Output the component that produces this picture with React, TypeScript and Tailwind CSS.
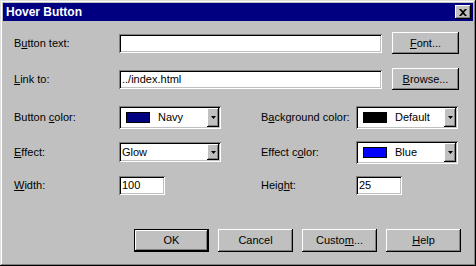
import React from "react";

const raised =
  "bg-[#c0c0c0] shadow-[inset_-1px_-1px_#000,inset_1px_1px_#fff,inset_-2px_-2px_#808080]";
const sunken =
  "bg-white shadow-[inset_1px_1px_#808080,inset_-1px_-1px_#fff,inset_2px_2px_#000,inset_-2px_-2px_#c0c0c0]";

function U({ children }: { children: React.ReactNode }) {
  return <span className="underline decoration-1 underline-offset-[1px]">{children}</span>;
}

function Label({ w, children }: { w: string; children: React.ReactNode }) {
  return <div className={`${w} shrink-0 text-[11px] text-black`}>{children}</div>;
}

function Input({ w, h = "h-[19px]", value }: { w: string; h?: string; value?: string }) {
  return (
    <div className={`${w} ${h} ${sunken} shrink-0 flex items-center pl-[3px] text-[11px] text-black`}>
      {value}
    </div>
  );
}

function Btn({ w, h, def, children }: { w: string; h: string; def?: boolean; children: React.ReactNode }) {
  if (def) {
    return (
      <div className={`${w} ${h} shrink-0 border border-black flex`}>
        <div className={`flex-1 ${raised} flex items-center justify-center text-[11px] text-black`}>
          {children}
        </div>
      </div>
    );
  }
  return (
    <div className={`${w} ${h} ${raised} shrink-0 flex items-center justify-center text-[11px] text-black`}>
      {children}
    </div>
  );
}

function Arrow() {
  return (
    <div className={`w-[12px] h-full ${raised} flex items-center justify-center`}>
      <svg width="5" height="3" viewBox="0 0 5 3">
        <path d="M0 0h5L2.5 3z" fill="#000" />
      </svg>
    </div>
  );
}

function ColorSelect({ w, h, color, label }: { w: string; h: string; color: string; label: string }) {
  return (
    <div className={`${w} ${h} ${sunken} shrink-0 flex p-[2px]`}>
      <div className="flex-1 flex items-center pl-[5px]">
        <div className="w-[24px] h-[11px] border border-black" style={{ background: color }} />
        <span className="ml-[8px] text-[11px] text-black">{label}</span>
      </div>
      <Arrow />
    </div>
  );
}

function TextSelect({ w, h, label }: { w: string; h: string; label: string }) {
  return (
    <div className={`${w} ${h} ${sunken} shrink-0 flex p-[2px]`}>
      <div className="flex-1 flex items-center pl-[1px] text-[11px] text-black">{label}</div>
      <Arrow />
    </div>
  );
}

export default function App() {
  return (
    <div
      className="w-[476px] h-[266px] bg-[#c0c0c0] p-[3px] flex flex-col shadow-[inset_-1px_-1px_#000,inset_1px_1px_#dfdfdf,inset_-2px_-2px_#808080,inset_2px_2px_#fff]"
      style={{ fontFamily: '"Liberation Sans", Arial, sans-serif' }}
    >
      <div className="h-[18px] bg-[#000080] flex items-center justify-between pl-[3px] pr-[2px]">
        <span className="text-white font-bold text-[12px]">Hover Button</span>
        <div className={`w-[16px] h-[14px] ${raised} flex items-center justify-center`}>
          <svg width="8" height="7" viewBox="0 0 8 7">
            <path d="M0 0h2l2 2 2-2h2L5 3.5 8 7H6L4 5 2 7H0l3-3.5z" fill="#000" />
          </svg>
        </div>
      </div>

      <div className="flex flex-col pl-[11px]">
        <div className="mt-[11px] h-[22px] flex items-center">
          <Label w="w-[105px]">
            B<U>u</U>tton text:
          </Label>
          <Input w="w-[263px]" />
          <div className="ml-[10px]">
            <Btn w="w-[67px]" h="h-[22px]">
              <U>F</U>ont...
            </Btn>
          </div>
        </div>

        <div className="mt-[14px] h-[22px] flex items-center">
          <Label w="w-[105px]">
            <U>L</U>ink to:
          </Label>
          <Input w="w-[263px]" value="../index.html" />
          <div className="ml-[10px]">
            <Btn w="w-[67px]" h="h-[22px]">
              <U>B</U>rowse...
            </Btn>
          </div>
        </div>

        <div className="mt-[16px] h-[23px] flex items-center">
          <Label w="w-[105px]">
            Button <U>c</U>olor:
          </Label>
          <ColorSelect w="w-[102px]" h="h-[23px]" color="#000080" label="Navy" />
          <div className="ml-[40px] flex items-center">
            <Label w="w-[95px]">
              B<U>a</U>ckground color:
            </Label>
            <ColorSelect w="w-[102px]" h="h-[23px]" color="#000000" label="Default" />
          </div>
        </div>

        <div className="mt-[13px] h-[20px] flex items-center">
          <Label w="w-[105px]">
            <U>E</U>ffect:
          </Label>
          <TextSelect w="w-[102px]" h="h-[20px]" label="Glow" />
          <div className="ml-[40px] flex items-center">
            <Label w="w-[95px]">
              Effect c<U>o</U>lor:
            </Label>
            <ColorSelect w="w-[102px]" h="h-[23px]" color="#0000ff" label="Blue" />
          </div>
        </div>

        <div className="mt-[14px] h-[19px] flex items-center">
          <Label w="w-[105px]">
            <U>W</U>idth:
          </Label>
          <Input w="w-[46px]" value="100" />
          <div className="ml-[96px] flex items-center">
            <Label w="w-[95px]">
              Heig<U>h</U>t:
            </Label>
            <Input w="w-[46px]" value="25" />
          </div>
        </div>

        <div className="mt-[34px] pl-[120px] flex gap-[9px]">
          <Btn w="w-[75px]" h="h-[23px]" def>
            OK
          </Btn>
          <Btn w="w-[75px]" h="h-[23px]">Cancel</Btn>
          <Btn w="w-[75px]" h="h-[23px]">
            Custo<U>m</U>...
          </Btn>
          <Btn w="w-[75px]" h="h-[23px]">
            <U>H</U>elp
          </Btn>
        </div>
      </div>
    </div>
  );
}
